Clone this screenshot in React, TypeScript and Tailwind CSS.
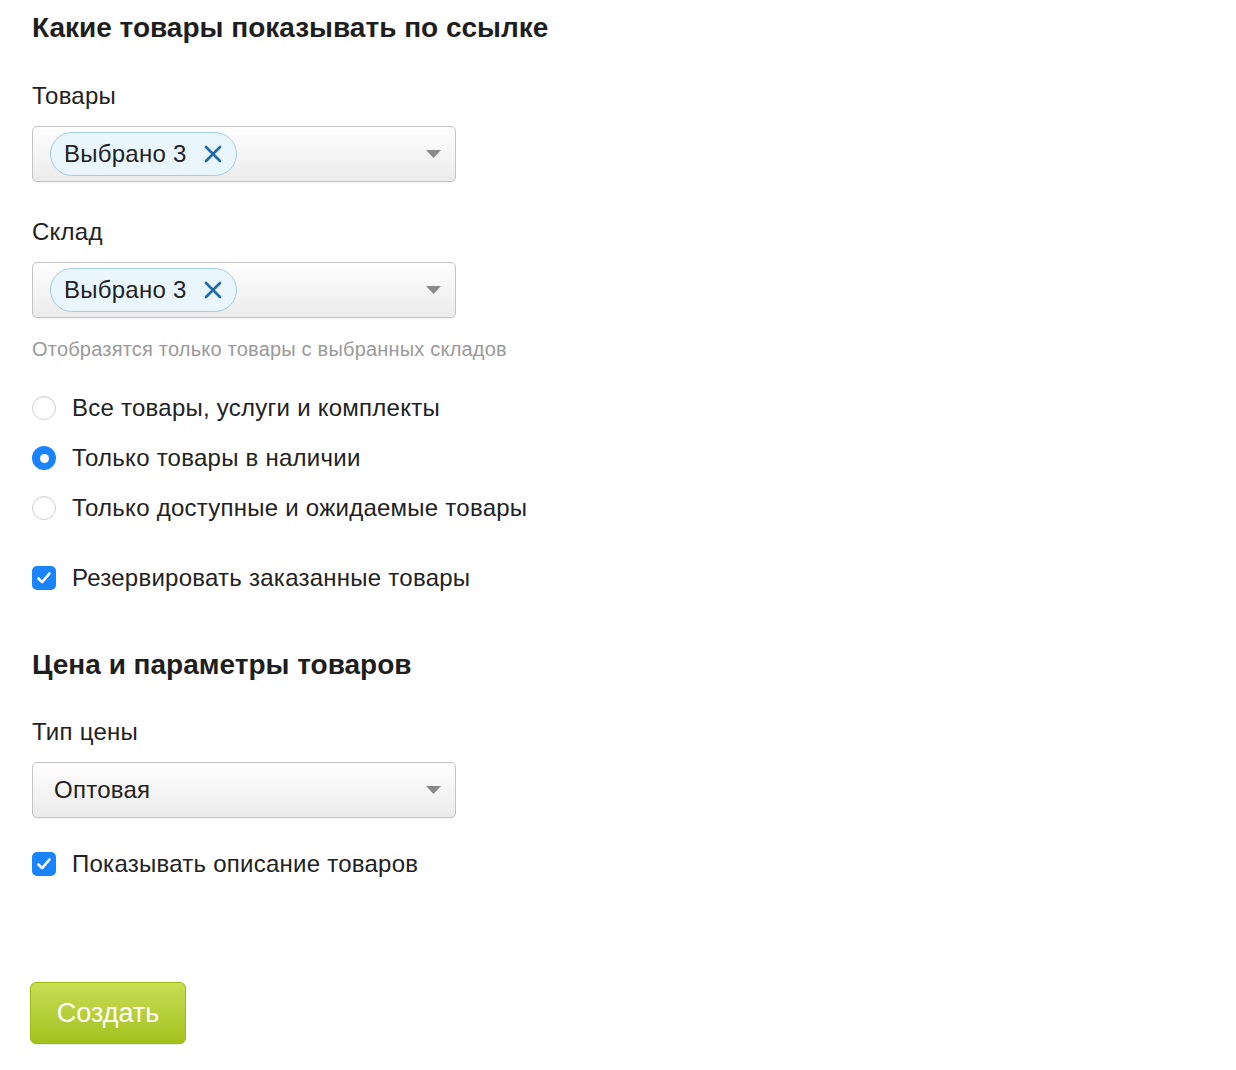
import { useState } from 'react';

function Arrow() {
  return (
    <svg className="w-[15px] h-[8px] flex-shrink-0" viewBox="0 0 15 8">
      <path d="M0 0h15L7.5 8z" fill="#8a8a8a" />
    </svg>
  );
}

function Chip({ label }: { label: string }) {
  return (
    <span className="flex items-center h-[44px] pl-[13px] pr-[14px] rounded-full border border-[#a3cce6] bg-[#eaf6fe] text-[24px] tracking-[0.25px] text-[#222]">
      {label}
      <svg className="ml-[17px] w-[18px] h-[18px]" viewBox="0 0 18 18" fill="none" stroke="#1c6aa6" strokeWidth={2.6} strokeLinecap="round">
        <path d="M2 2l14 14M16 2L2 16" />
      </svg>
    </span>
  );
}

function Select({ children }: { children: React.ReactNode }) {
  return (
    <div className="flex items-center w-[424px] h-[56px] pl-[17px] pr-[14px] rounded-[5px] border border-[#c4c4c4] bg-gradient-to-b from-[#ffffff] to-[#ebebeb] shadow-[0_1px_1px_rgba(0,0,0,0.06)]">
      <div className="flex-1 flex items-center">{children}</div>
      <Arrow />
    </div>
  );
}

function Radio({ checked, label, onClick }: { checked: boolean; label: string; onClick: () => void }) {
  return (
    <div className="flex items-center h-[28px] cursor-pointer" onClick={onClick}>
      {checked ? (
        <span className="w-[24px] h-[24px] rounded-full bg-[#1a84ff] flex items-center justify-center">
          <span className="w-[9px] h-[9px] rounded-full bg-white" />
        </span>
      ) : (
        <span className="w-[24px] h-[24px] rounded-full border border-[#cfcfcf] bg-white shadow-[inset_0_1px_1px_rgba(0,0,0,0.05)]" />
      )}
      <span className="ml-[16px] text-[24px] tracking-[0.25px] text-[#222]">{label}</span>
    </div>
  );
}

function Checkbox({ checked, label, onClick }: { checked: boolean; label: string; onClick: () => void }) {
  return (
    <div className="flex items-center h-[28px] cursor-pointer" onClick={onClick}>
      {checked ? (
        <span className="w-[24px] h-[24px] rounded-[5px] bg-[#1a84ff] flex items-center justify-center">
          <svg className="w-[16px] h-[16px]" viewBox="0 0 16 16" fill="none" stroke="white" strokeWidth={2.6} strokeLinecap="round" strokeLinejoin="round">
            <path d="M2.5 8.5l3.6 3.6L13.5 3.5" />
          </svg>
        </span>
      ) : (
        <span className="w-[24px] h-[24px] rounded-[5px] border border-[#cfcfcf] bg-white" />
      )}
      <span className="ml-[16px] text-[24px] tracking-[0.25px] text-[#222]">{label}</span>
    </div>
  );
}

export default function App() {
  const [stock, setStock] = useState(1);
  const [reserve, setReserve] = useState(true);
  const [showDesc, setShowDesc] = useState(true);

  const options = ['Все товары, услуги и комплекты', 'Только товары в наличии', 'Только доступные и ожидаемые товары'];

  return (
    <div className="min-h-[1070px] bg-white pl-[32px] font-['Liberation_Sans',Arial,sans-serif] text-[#222]">
      {/* ── Which goods ───────────────────────── */}
      <h1 className="pt-[12px] text-[28px] leading-[32px] font-bold text-[#1e1e1e]">Какие товары показывать по ссылке</h1>

      <div className="mt-[38px] text-[24px] leading-[28px] tracking-[0.25px]">Товары</div>
      <div className="mt-[16px]">
        <Select>
          <Chip label="Выбрано 3" />
        </Select>
      </div>

      <div className="mt-[36px] text-[24px] leading-[28px] tracking-[0.25px]">Склад</div>
      <div className="mt-[16px]">
        <Select>
          <Chip label="Выбрано 3" />
        </Select>
      </div>
      <p className="mt-[19px] text-[20px] leading-[24px] tracking-[0.2px] text-[#9a9a9a]">Отобразятся только товары с выбранных складов</p>

      <div className="mt-[33px] flex flex-col gap-[22px]">
        {options.map((o, i) => (
          <Radio key={o} label={o} checked={stock === i} onClick={() => setStock(i)} />
        ))}
      </div>

      <div className="mt-[42px]">
        <Checkbox label="Резервировать заказанные товары" checked={reserve} onClick={() => setReserve(!reserve)} />
      </div>

      {/* ── Price ─────────────────────────────── */}
      <h2 className="mt-[57px] text-[28px] leading-[32px] font-bold text-[#1e1e1e]">Цена и параметры товаров</h2>

      <div className="mt-[37px] text-[24px] leading-[28px] tracking-[0.25px]">Тип цены</div>
      <div className="mt-[16px]">
        <Select>
          <span className="text-[24px] tracking-[0.25px] text-[#222] ml-[4px]">Оптовая</span>
        </Select>
      </div>

      <div className="mt-[32px]">
        <Checkbox label="Показывать описание товаров" checked={showDesc} onClick={() => setShowDesc(!showDesc)} />
      </div>

      <button className="mt-[104px] -ml-[2px] w-[156px] h-[62px] rounded-[6px] border border-[#9dbb10] bg-gradient-to-b from-[#c8de52] to-[#a4c11a] text-[27px] text-white shadow-[0_1px_1px_rgba(0,0,0,0.08)]">
        Создать
      </button>
    </div>
  );
}
